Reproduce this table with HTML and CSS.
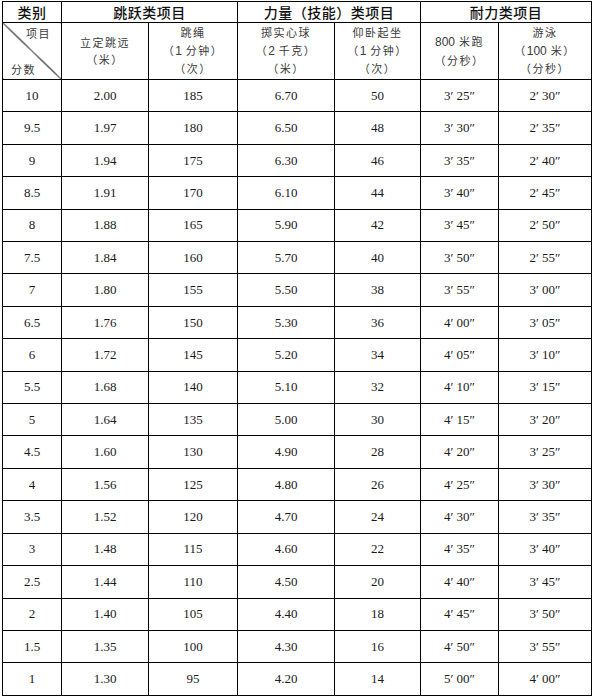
FILE: index.html
```html
<!DOCTYPE html>
<html lang="zh">
<head>
<meta charset="utf-8">
<link rel="stylesheet" href="styles.css">
</head>
<body>
<table class="score">
  <colgroup>
    <col class="c1"><col class="c2"><col class="c3"><col class="c4"><col class="c5"><col class="c6"><col class="c7">
  </colgroup>
  <thead>
    <tr class="h1">
      <th>类别</th>
      <th colspan="2">跳跃类项目</th>
      <th colspan="2">力量（技能）类项目</th>
      <th colspan="2">耐力类项目</th>
    </tr>
    <tr class="h2">
      <td class="diag"><div class="diag-in"><span class="d-top">项目</span><span class="d-bot">分数</span></div></td>
      <td>立定跳远<br>（米）</td>
      <td>跳绳<br>（<span class="n">1</span> 分钟）<br>（次）</td>
      <td>掷实心球<br>（<span class="n">2</span> 千克）<br>（米）</td>
      <td>仰卧起坐<br>（<span class="n">1</span> 分钟）<br>（次）</td>
      <td><span class="n">800</span> 米跑<br>（分秒）</td>
      <td>游泳<br>（<span class="n">100</span> 米）<br>（分秒）</td>
    </tr>
  </thead>
  <tbody>
    <tr><td>10</td><td>2.00</td><td>185</td><td>6.70</td><td>50</td><td>3′ 25″</td><td>2′ 30″</td></tr>
    <tr><td>9.5</td><td>1.97</td><td>180</td><td>6.50</td><td>48</td><td>3′ 30″</td><td>2′ 35″</td></tr>
    <tr><td>9</td><td>1.94</td><td>175</td><td>6.30</td><td>46</td><td>3′ 35″</td><td>2′ 40″</td></tr>
    <tr><td>8.5</td><td>1.91</td><td>170</td><td>6.10</td><td>44</td><td>3′ 40″</td><td>2′ 45″</td></tr>
    <tr><td>8</td><td>1.88</td><td>165</td><td>5.90</td><td>42</td><td>3′ 45″</td><td>2′ 50″</td></tr>
    <tr><td>7.5</td><td>1.84</td><td>160</td><td>5.70</td><td>40</td><td>3′ 50″</td><td>2′ 55″</td></tr>
    <tr><td>7</td><td>1.80</td><td>155</td><td>5.50</td><td>38</td><td>3′ 55″</td><td>3′ 00″</td></tr>
    <tr><td>6.5</td><td>1.76</td><td>150</td><td>5.30</td><td>36</td><td>4′ 00″</td><td>3′ 05″</td></tr>
    <tr><td>6</td><td>1.72</td><td>145</td><td>5.20</td><td>34</td><td>4′ 05″</td><td>3′ 10″</td></tr>
    <tr><td>5.5</td><td>1.68</td><td>140</td><td>5.10</td><td>32</td><td>4′ 10″</td><td>3′ 15″</td></tr>
    <tr><td>5</td><td>1.64</td><td>135</td><td>5.00</td><td>30</td><td>4′ 15″</td><td>3′ 20″</td></tr>
    <tr><td>4.5</td><td>1.60</td><td>130</td><td>4.90</td><td>28</td><td>4′ 20″</td><td>3′ 25″</td></tr>
    <tr><td>4</td><td>1.56</td><td>125</td><td>4.80</td><td>26</td><td>4′ 25″</td><td>3′ 30″</td></tr>
    <tr><td>3.5</td><td>1.52</td><td>120</td><td>4.70</td><td>24</td><td>4′ 30″</td><td>3′ 35″</td></tr>
    <tr><td>3</td><td>1.48</td><td>115</td><td>4.60</td><td>22</td><td>4′ 35″</td><td>3′ 40″</td></tr>
    <tr><td>2.5</td><td>1.44</td><td>110</td><td>4.50</td><td>20</td><td>4′ 40″</td><td>3′ 45″</td></tr>
    <tr><td>2</td><td>1.40</td><td>105</td><td>4.40</td><td>18</td><td>4′ 45″</td><td>3′ 50″</td></tr>
    <tr><td>1.5</td><td>1.35</td><td>100</td><td>4.30</td><td>16</td><td>4′ 50″</td><td>3′ 55″</td></tr>
    <tr><td>1</td><td>1.30</td><td>95</td><td>4.20</td><td>14</td><td>5′ 00″</td><td>4′ 00″</td></tr>
  </tbody>
</table>
</body>
</html>
```
FILE: styles.css
```css
html, body {
  margin: 0;
  padding: 0;
  background: #ffffff;
}
body {
  padding: 1px 0 0 2px;
}
.score {
  border-collapse: collapse;
  table-layout: fixed;
  width: 590px;
  font-family: "Liberation Serif", "Noto Sans CJK SC", serif;
  font-size: 13px;
  color: #1a1a1a;
}
.c1 { width: 59px; }
.c2 { width: 87px; }
.c3 { width: 89px; }
.c4 { width: 97px; }
.c5 { width: 86px; }
.c6 { width: 78px; }
.c7 { width: 93px; }
.score th,
.score td {
  border: 1px solid #000;
  padding: 0;
  text-align: center;
  vertical-align: middle;
}
.h1 { height: 21px; }
.h1 th {
  font-family: "Noto Sans CJK SC", sans-serif;
  font-size: 14px;
  font-weight: 500;
  color: #111;
  line-height: 18px;
  letter-spacing: 0.5px;
}
.h2 { height: 57px; }
.h2 td {
  font-family: "Noto Sans CJK SC", sans-serif;
  font-size: 11px;
  line-height: 17.5px;
  letter-spacing: 1.5px;
  color: #3a3a3a;
}
.h2 .n {
  font-family: "Liberation Sans", sans-serif;
  font-size: 12px;
  letter-spacing: 0;
}
.score tbody tr { height: 32.42px; }
.score tbody td { line-height: 16px; }
.diag {
  background: linear-gradient(to top right, transparent calc(50% - 0.7px), #000 calc(50% - 0.2px), #000 calc(50% + 0.2px), transparent calc(50% + 0.7px));
}
.diag-in {
  display: flex;
  flex-direction: column;
  justify-content: space-between;
  height: 52px;
}
.d-top {
  align-self: flex-end;
  padding-right: 10px;
  line-height: 16px;
}
.d-bot {
  align-self: flex-start;
  padding-left: 8px;
  line-height: 16px;
}
```
